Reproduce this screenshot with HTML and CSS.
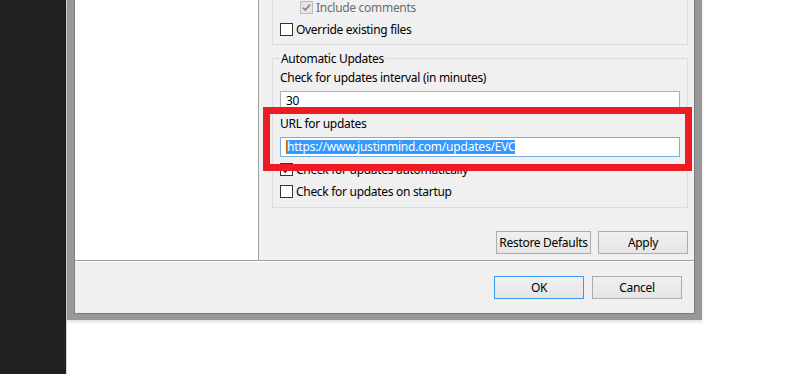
FILE: index.html
```html
<!DOCTYPE html>
<html>
<head>
<meta charset="utf-8">
<title>Preferences</title>
<link rel="stylesheet" href="styles.css">
</head>
<body>
<div class="screen">
  <div class="desk"></div>
  <div class="stage">
    <div class="dialog">
      <div class="dialog-inner">
        <div class="main">
          <div class="nav"></div>
          <div class="page">
            <div class="group group-top">
              <div class="check-row indent disabled">
                <span class="cb cb-disabled"><svg viewBox="0 0 11 11" width="11" height="11"><path d="M2 5.6 L4.3 8 L9 2.6" fill="none" stroke="#8a8a8a" stroke-width="1.8"/></svg></span>
                <span>Include comments</span>
              </div>
              <div class="check-row">
                <span class="cb"></span>
                <span>Override existing files</span>
              </div>
            </div>
            <fieldset class="group group-updates">
              <legend>Automatic Updates</legend>
              <div class="field-label">Check for updates interval (in minutes)</div>
              <div class="textbox">30</div>
              <div class="field-label">URL for updates</div>
              <div class="textbox focused"><span class="caret"></span><span class="sel">https://www.justinmind.com/updates/EVC</span></div>
              <div class="check-row first">
                <span class="cb"><svg viewBox="0 0 11 11" width="11" height="11"><path d="M2 5.6 L4.3 8 L9 2.6" fill="none" stroke="#222" stroke-width="1.8"/></svg></span>
                <span>Check for updates automatically</span>
              </div>
              <div class="check-row">
                <span class="cb"></span>
                <span>Check for updates on startup</span>
              </div>
            </fieldset>
            <div class="page-buttons">
              <button class="btn btn-restore">Restore Defaults</button>
              <button class="btn">Apply</button>
            </div>
          </div>
        </div>
        <div class="footer">
          <button class="btn btn-default">OK</button>
          <button class="btn">Cancel</button>
        </div>
      </div>
    </div>
    <div class="highlight"></div>
  </div>
</div>
</body>
</html>
```
FILE: styles.css
```css
* { box-sizing: border-box; }
html, body { margin: 0; padding: 0; }
body {
  width: 802px;
  height: 374px;
  overflow: hidden;
  background: #fff;
  font-family: "Noto Sans", "Open Sans", sans-serif;
  font-size: 12px;
  letter-spacing: -0.3px;
  color: #000;
}
.screen { display: flex; height: 374px; }
.desk {
  width: 67px;
  flex: none;
  background: #212121;
  border-right: 1px solid #d4d4d4;
}
.stage { position: relative; flex: 1; }
.dialog {
  width: 635px;
  height: 320px;
  border: solid #989898;
  border-width: 0 7px 6px 7px;
  box-shadow: 0 2px 3px rgba(0, 0, 0, 0.12);
}
.dialog-inner {
  height: 100%;
  border: solid #7c7c7c;
  border-width: 0 1px 1px 1px;
  display: flex;
  flex-direction: column;
  background: #f0f0f0;
}
.main { height: 260px; display: flex; flex: none; }
.nav {
  width: 184px;
  background: #fff;
  border-right: 1px solid #a0a0a0;
}
.page {
  flex: 1;
  padding: 0 6px 0 13px;
  display: flex;
  flex-direction: column;
}
.group-top {
  border: 1px solid #dcdcdc;
  border-top: none;
  padding: 1px 7px 8px;
}
.check-row {
  display: flex;
  align-items: center;
  gap: 3px;
  height: 13px;
  line-height: 16px;
  white-space: nowrap;
}
.check-row + .check-row { margin-top: 9px; }
.check-row.first { margin-top: 6px; }
.check-row.indent { padding-left: 20px; }
.check-row.disabled { color: #6d6d6d; }
.cb {
  width: 13px;
  height: 13px;
  flex: none;
  border: 1px solid #333;
  background: #fff;
  display: flex;
  align-items: center;
  justify-content: center;
}
.cb svg { display: block; }
.cb-disabled { border-color: #bcbcbc; background: #e6e6e6; }
.group-updates {
  margin: 6px 0 0;
  padding: 0 7px 9px;
  border: 1px solid #dcdcdc;
  min-width: 0;
}
.group-updates legend {
  padding: 0 1px;
  line-height: 15px;
}
.field-label {
  line-height: 16px;
  margin-top: 4px;
  white-space: nowrap;
}
.field-label + .textbox { margin-top: 5px; }
.textbox + .field-label { margin-top: 5px; }
.textbox {
  height: 20px;
  border: 1px solid #abadb3;
  background: #fff;
  padding: 0 5px;
  line-height: 18px;
  display: flex;
  align-items: center;
  white-space: nowrap;
}
.textbox.focused { border-color: #7aaee6; }
.caret { width: 1px; height: 14px; background: #cc6600; flex: none; }
.sel {
  display: inline-block;
  height: 14px;
  line-height: 14px;
  background: #3399ff;
  color: #fff;
  letter-spacing: -0.2px;
}
.page-buttons {
  margin-top: 23px;
  display: flex;
  justify-content: flex-end;
  gap: 7px;
}
.btn {
  width: 90px;
  height: 23px;
  padding: 0;
  border: 1px solid #acacac;
  background: linear-gradient(#f0f0f0, #e5e5e5);
  font-family: inherit;
  font-size: 12px;
  letter-spacing: -0.3px;
  color: #000;
  line-height: 20px;
  white-space: nowrap;
}
.btn-restore { width: 95px; }
.btn-default { border-color: #3c97f0; }
.footer {
  flex: 1;
  border-top: 1px solid #a0a0a0;
  box-shadow: inset 0 1px #fff;
  display: flex;
  justify-content: flex-end;
  align-items: flex-start;
  gap: 8px;
  padding: 15px 12px 0 0;
}
.highlight {
  position: absolute;
  left: 196px;
  top: 107px;
  width: 429px;
  height: 64px;
  border: 7px solid #ed1c24;
}
```
